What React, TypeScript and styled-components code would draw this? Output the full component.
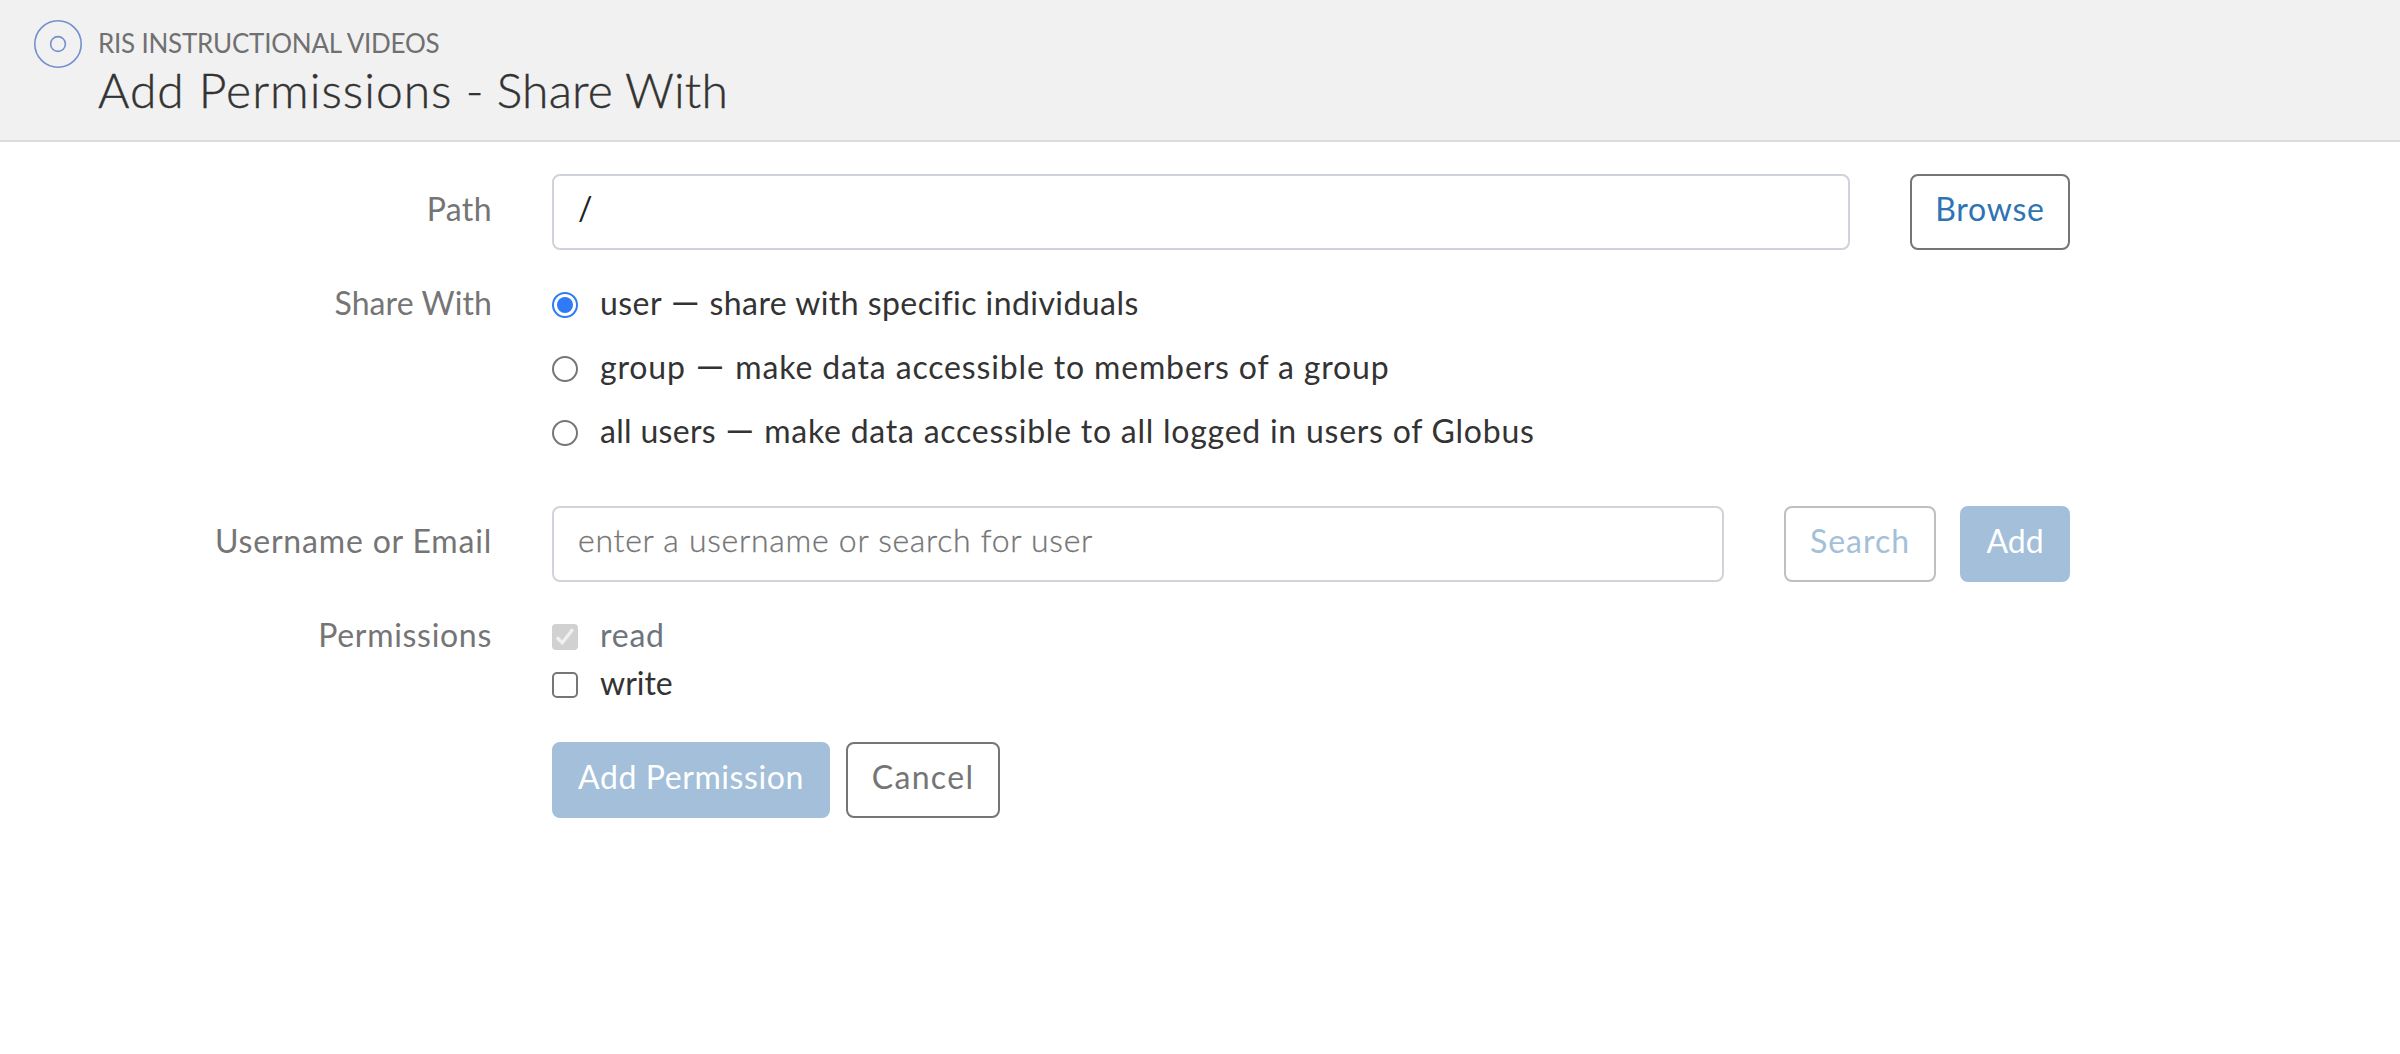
import React from "react";
import styled, { createGlobalStyle } from "styled-components";

const Global = createGlobalStyle`
  *, *::before, *::after { box-sizing: border-box; }
  body {
    margin: 0;
    background: #fff;
    color: #333;
    font-family: Lato, "Noto Sans", sans-serif;
    font-size: 32px;
    line-height: 48px;
  }
`;

const T = styled.span<{ $ls?: number }>`
  letter-spacing: ${(p) => p.$ls ?? 0}px;
  white-space: nowrap;
`;

const Dash = styled.span`
  margin: 0 1px;
  font-size: 36px;
  line-height: 0;
`;

const Header = styled.header`
  display: flex;
  align-items: flex-start;
  gap: 16px;
  height: 142px;
  padding: 20px 34px 0;
  background: #f1f1f1;
  border-bottom: 2px solid #dcdcdc;
`;

const Logo = styled.svg`
  flex: none;
  width: 48px;
  height: 48px;
`;

const Titles = styled.div`
  display: flex;
  flex-direction: column;
  padding-top: 7px;
`;

const Kicker = styled.div`
  font-size: 26px;
  line-height: 32px;
  color: #707070;
`;

const Title = styled.h1`
  margin: 3px 0 0;
  font-size: 48px;
  line-height: 56px;
  font-weight: 300;
  -webkit-text-stroke: 0.4px currentColor;
`;

const Form = styled.form`
  display: flex;
  flex-direction: column;
  width: 2070px;
  padding-top: 32px;
`;

const Row = styled.div<{ $gap: number }>`
  display: grid;
  grid-template-columns: 492px 1fr;
  column-gap: 60px;
  margin-bottom: ${(p) => p.$gap}px;
`;

const Label = styled.div<{ $top?: number }>`
  padding-top: ${(p) => p.$top ?? 1}px;
  text-align: right;
  color: #757575;
`;

const Controls = styled.div`
  display: flex;
`;

const Input = styled.input`
  flex: 1;
  min-width: 0;
  height: 76px;
  margin-right: 60px;
  padding: 0 24px 10px;
  border: 2px solid #ced4da;
  border-radius: 8px;
  outline: none;
  background: #fff;
  color: #212121;
  font: inherit;
  &::placeholder {
    color: #757575;
    opacity: 1;
    font-weight: 300;
    letter-spacing: 0.72px;
    -webkit-text-stroke: 0.3px #757575;
  }
`;

const Button = styled.button<{
  $w: number;
  $kind: "link" | "plain" | "off" | "solid";
  $ml?: number;
}>`
  display: flex;
  justify-content: center;
  flex: none;
  width: ${(p) => p.$w}px;
  height: 76px;
  margin: 0 0 0 ${(p) => p.$ml ?? 0}px;
  padding: 9px 0 0;
  border: 2px solid
    ${(p) => ({ link: "#757575", plain: "#757575", off: "#bfbfbf", solid: "#a3bfda" })[p.$kind]};
  border-radius: 8px;
  background: ${(p) => (p.$kind === "solid" ? "#a3bfda" : "#fff")};
  color: ${(p) => ({ link: "#2e74b2", plain: "#757575", off: "#a3bfda", solid: "#fff" })[p.$kind]};
  font: inherit;
`;

const Options = styled.div<{ $gap: number }>`
  display: flex;
  flex-direction: column;
  gap: ${(p) => p.$gap}px;
`;

const Option = styled.label<{ $muted?: boolean }>`
  display: flex;
  align-items: flex-start;
  gap: 22px;
  height: 48px;
  padding-top: 1px;
  color: ${(p) => (p.$muted ? "#6c757d" : "#333")};
`;

const Mark = styled.svg`
  flex: none;
  width: 26px;
  height: 26px;
  margin-top: 13px;
`;

function Radio({ on }: { on?: boolean }) {
  return (
    <Mark viewBox="0 0 26 26">
      <circle cx="13" cy="13" r="12" fill="#fff" stroke={on ? "#2f7bf6" : "#767676"} strokeWidth="2" />
      {on && <circle cx="13" cy="13" r="8" fill="#2f7bf6" />}
    </Mark>
  );
}

function Check({ on }: { on?: boolean }) {
  return (
    <Mark viewBox="0 0 26 26">
      {on ? (
        <>
          <rect width="26" height="26" rx="4" fill="#d1d1d1" />
          <path d="M4.8 13.4 L10.3 18.8 L20.8 5.2" fill="none" stroke="#f0f0f0" strokeWidth="3.4" />
        </>
      ) : (
        <rect x="1" y="1" width="24" height="24" rx="4" fill="#fff" stroke="#767676" strokeWidth="2" />
      )}
    </Mark>
  );
}

export default function App() {
  return (
    <>
      <Global />
      <Header>
        <Logo viewBox="0 0 48 48" fill="none" stroke="#7390cf" strokeWidth="1.6">
          <circle cx="24" cy="24" r="23.2" />
          <circle cx="24" cy="24" r="7.4" />
        </Logo>
        <Titles>
          <Kicker><T $ls={-0.23}>RIS INSTRUCTIONAL VIDEOS</T></Kicker>
          <Title><T $ls={1}>Add Permissions</T><T $ls={0.15}> - Share With</T></Title>
        </Titles>
      </Header>
      <Form>
        <Row $gap={28}>
          <Label $top={11}><T $ls={0.4}>Path</T></Label>
          <Controls>
            <Input defaultValue="/" />
            <Button type="button" $w={160} $kind="link"><T $ls={0.75}>Browse</T></Button>
          </Controls>
        </Row>
        <Row $gap={52}>
          <Label><T $ls={0.1}>Share With</T></Label>
          <Options $gap={16}>
            <Option><Radio on /><T $ls={0.43}>user <Dash>—</Dash> share with specific individuals</T></Option>
            <Option><Radio /><T $ls={0.85}>group <Dash>—</Dash> make data accessible to members of a group</T></Option>
            <Option>
              <Radio />
              <div>
                <T $ls={0.3}>all users <Dash>—</Dash></T>
                <T $ls={0.76}> make data accessible to all logged in users of Globus</T>
              </div>
            </Option>
          </Options>
        </Row>
        <Row $gap={28}>
          <Label $top={11}><T $ls={0.82}>Username or Email</T></Label>
          <Controls>
            <Input placeholder="enter a username or search for user" />
            <Button type="button" $w={152} $kind="off"><T $ls={0.95}>Search</T></Button>
            <Button type="button" $w={110} $kind="solid" $ml={24}><T>Add</T></Button>
          </Controls>
        </Row>
        <Row $gap={36}>
          <Label><T $ls={0.7}>Permissions</T></Label>
          <Options $gap={0}>
            <Option $muted><Check on /><T $ls={0.75}>read</T></Option>
            <Option><Check /><T>write</T></Option>
          </Options>
        </Row>
        <Row $gap={0}>
          <span />
          <Controls>
            <Button type="button" $w={278} $kind="solid"><T $ls={0.6}>Add Permission</T></Button>
            <Button type="button" $w={154} $kind="plain" $ml={16}><T $ls={1.35}>Cancel</T></Button>
          </Controls>
        </Row>
      </Form>
    </>
  );
}
